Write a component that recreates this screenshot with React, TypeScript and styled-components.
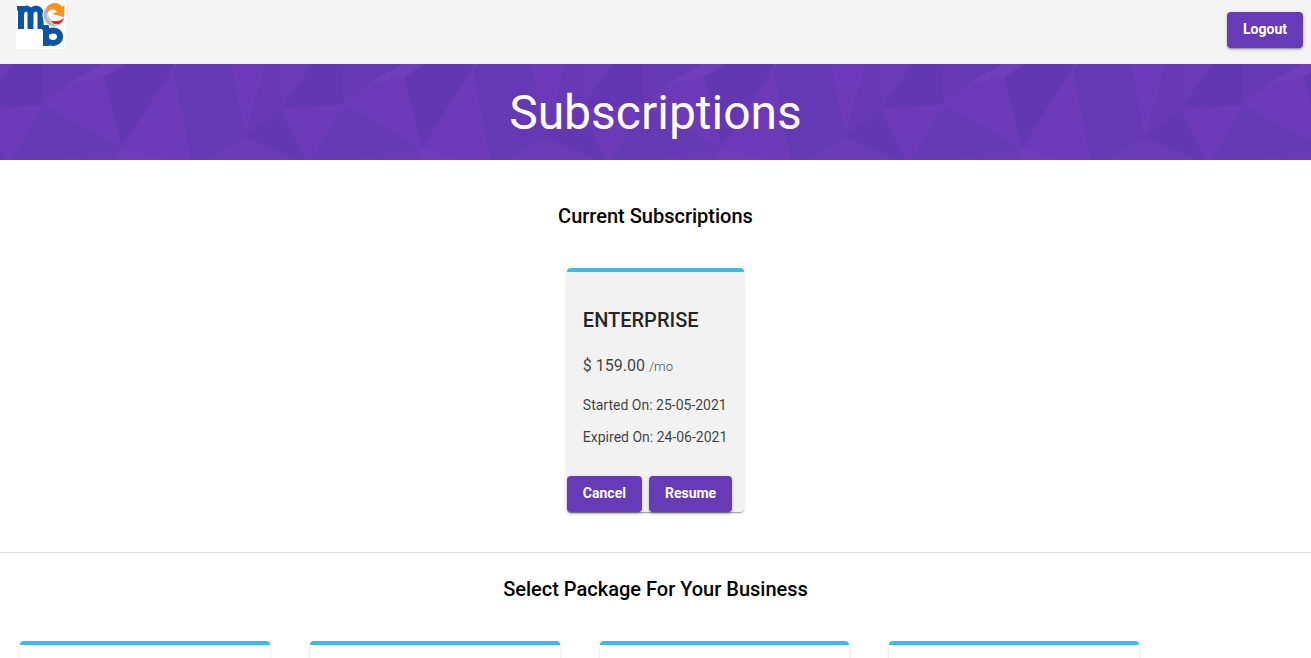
import React from "react";
import styled, { createGlobalStyle } from "styled-components";

const purple = "#673ab7";
const sky = "#38bde6";

const GlobalStyle = createGlobalStyle`
  *, *::before, *::after { box-sizing: border-box; }
  html { scrollbar-width: none; }
  body {
    margin: 0;
    background: #fff;
    color: #000;
    font-family: Roboto, "Liberation Sans", sans-serif;
    font-size: 14px;
  }
  h1, h2, h3, p { margin: 0; }
`;

const Toolbar = styled.header`
  display: flex;
  align-items: flex-start;
  justify-content: space-between;
  height: 64px;
  padding: 0 8px 0 16px;
  background: #f4f4f4;
`;

const LogoLink = styled.a`
  display: block;
  width: 50px;
  height: 49px;
  background: #fff;
  svg { display: block; }
`;

const Button = styled.button`
  height: 36px;
  padding: 0 16px 2px;
  border: 0;
  border-radius: 4px;
  background: ${purple};
  color: #fff;
  font-family: inherit;
  font-size: 14px;
  font-weight: 700;
  line-height: 34px;
  cursor: pointer;
  box-shadow: 0 3px 1px -2px rgba(0, 0, 0, 0.2), 0 2px 2px 0 rgba(0, 0, 0, 0.14),
    0 1px 5px 0 rgba(0, 0, 0, 0.12);
`;

const ToolbarActions = styled.div`
  display: flex;
  padding-top: 12px;
`;

const Banner = styled.section`
  display: grid;
  height: 96px;
  overflow: hidden;
  background: ${purple};
  > * { grid-area: 1 / 1; }
`;

const BannerTitle = styled.h1`
  z-index: 1;
  color: #fff;
  font-size: 48px;
  font-weight: 400;
  line-height: 98px;
  text-align: center;
`;

const Section = styled.section`
  display: flex;
  flex-direction: column;
  align-items: center;
  gap: 40px;
`;

const CurrentSection = styled(Section)`
  padding: 44px 20px 40px;
  border-bottom: 1px solid #e0e0e0;
`;

const PackageSection = styled(Section)`
  padding-top: 24px;
`;

const SectionTitle = styled.h2`
  font-size: 20px;
  font-weight: 500;
  line-height: 24px;
`;

const Card = styled.article`
  border-top: 4px solid ${sky};
  border-radius: 4px;
  box-shadow: 0 2px 1px -1px rgba(0, 0, 0, 0.2), 0 1px 1px 0 rgba(0, 0, 0, 0.14),
    0 1px 3px 0 rgba(0, 0, 0, 0.12);
`;

const PlanCard = styled(Card)`
  background: #f2f2f2;
  color: rgba(0, 0, 0, 0.87);
`;

const PlanBody = styled.div`
  display: flex;
  flex-direction: column;
  padding: 36px 16px 23px;
`;

const PlanName = styled.h3`
  font-size: 20px;
  font-weight: 500;
  line-height: 24px;
`;

const Price = styled.p`
  padding: 20px 0 9px;
  color: rgba(0, 0, 0, 0.75);
  font-size: 16px;
  font-weight: 400;
  line-height: 27px;
  small {
    font-size: 13px;
    font-weight: 300;
  }
`;

const PlanDate = styled.p`
  color: rgba(0, 0, 0, 0.75);
  font-size: 14px;
  font-weight: 400;
  line-height: 32px;
  white-space: nowrap;
`;

const PlanActions = styled.div`
  display: flex;
  gap: 7px;
  padding-right: 12px;
`;

const PackageGrid = styled.div`
  display: grid;
  grid-template-columns: repeat(4, 1fr);
  gap: 40px;
  width: 100%;
  padding: 0 172px 0 20px;
`;

const PackageCard = styled(Card)`
  min-height: 320px;
  background: #fff;
`;

function Logo() {
  return (
    <svg width="50" height="49" viewBox="0 0 50 49" role="img" aria-label="MCB">
      <g fill="none" stroke="#0b55a4" strokeWidth="6">
        <path d="M5 29V6M5 14C6 7 14 7 14.500 13V29M14.500 14C15 7 24 7 24.500 13V29" />
        <path d="M30 25V46" />
        <path d="M30 36C30 29 44 28 44 36.500C44 45 30 45 30 37" />
      </g>
      <path d="M1 6h4v4.500H1zM26 25h4v5h-4z" fill="#0b55a4" />
      <circle cx="38.500" cy="15" r="12" fill="#fff" />
      <path d="M29 13C29 2 42 0 46 7L48.500 5L48 17L36 14L41 12C38 8 33 9 31 14Z" fill="#f7941d" />
      <path d="M33 5C26 9 26 19 32 24C35 26 38 27 41 26C32 23 28 14 33 5Z" fill="#b4b6b9" />
      <path d="M31 12C29 19 34 24 40 23C36 21 33 18 31 12Z" fill="#d0d2d4" />
      <path d="M35 21C40 21 44 22 48 18C46 25 39 27 35 21Z" fill="#e0262d" />
    </svg>
  );
}

function BannerPattern() {
  return (
    <svg width="100%" height="96" aria-hidden="true">
      <defs>
        <linearGradient id="fold" x1="0" x2="1">
          <stop offset="0" stopColor="#6639b4" />
          <stop offset="1" stopColor="#6b3ab7" />
        </linearGradient>
        <pattern id="facets" width="300" height="96" patternUnits="userSpaceOnUse">
          <rect width="300" height="96" fill="#6639b4" />
          <path d="M-19 45L12 0H43L44 41Z" fill="#6337b2" />
          <path d="M281 45L312 0H343L344 41Z" fill="#6337b2" />
          <path d="M43 0H57L54 32L44 41Z" fill="#6739b5" />
          <path d="M-19 45L44 41L11 96H6Z" fill="#6c3ab8" />
          <path d="M281 45L344 41L311 96H306Z" fill="#6c3ab8" />
          <path d="M-19 45L6 96H-3L-55 73Z" fill="#6337b2" />
          <path d="M67 20L103 0H125L104 13Z" fill="#703dbb" />
          <path d="M44 41L67 20L104 13L122 84Z" fill="#6c3ab8" />
          <path d="M104 13L125 0H173V4L122 84Z" fill="#6337b2" />
          <path d="M122 84L45 96H115Z" fill="#693ab6" />
          <path d="M173 4L122 84L115 96H191Z" fill="#6c3ab8" />
          <path d="M122 84L115 96H165Z" fill="#6f3cba" />
          <path d="M173 4V0H178Z" fill="#703dbb" />
          <path d="M231 0H265L245 73Z" fill="#6c3ab8" />
          <path d="M265 0H312L281 45L245 73Z" fill="url(#fold)" />
          <path d="M-35 0H12L-19 45L-55 73Z" fill="url(#fold)" />
          <path d="M245 73L281 45L306 96H297Z" fill="#6337b2" />
          <path d="M245 73L208 96H297Z" fill="#6a3ab7" />
        </pattern>
      </defs>
      <rect width="100%" height="96" fill="url(#facets)" />
    </svg>
  );
}

const packages = ["first", "second", "third", "fourth"];

export default function App() {
  return (
    <>
      <GlobalStyle />
      <Toolbar>
        <LogoLink href="#">
          <Logo />
        </LogoLink>
        <ToolbarActions>
          <Button type="button">Logout</Button>
        </ToolbarActions>
      </Toolbar>
      <Banner>
        <BannerPattern />
        <BannerTitle>Subscriptions</BannerTitle>
      </Banner>
      <main>
        <CurrentSection>
          <SectionTitle>Current Subscriptions</SectionTitle>
          <PlanCard>
            <PlanBody>
              <PlanName>ENTERPRISE</PlanName>
              <Price>
                $ 159.00 <small>/mo</small>
              </Price>
              <PlanDate>Started On: 25-05-2021</PlanDate>
              <PlanDate>Expired On: 24-06-2021</PlanDate>
            </PlanBody>
            <PlanActions>
              <Button type="button">Cancel</Button>
              <Button type="button">Resume</Button>
            </PlanActions>
          </PlanCard>
        </CurrentSection>
        <PackageSection>
          <SectionTitle>Select Package For Your Business</SectionTitle>
          <PackageGrid>
            {packages.map((id) => (
              <PackageCard key={id} />
            ))}
          </PackageGrid>
        </PackageSection>
      </main>
    </>
  );
}
